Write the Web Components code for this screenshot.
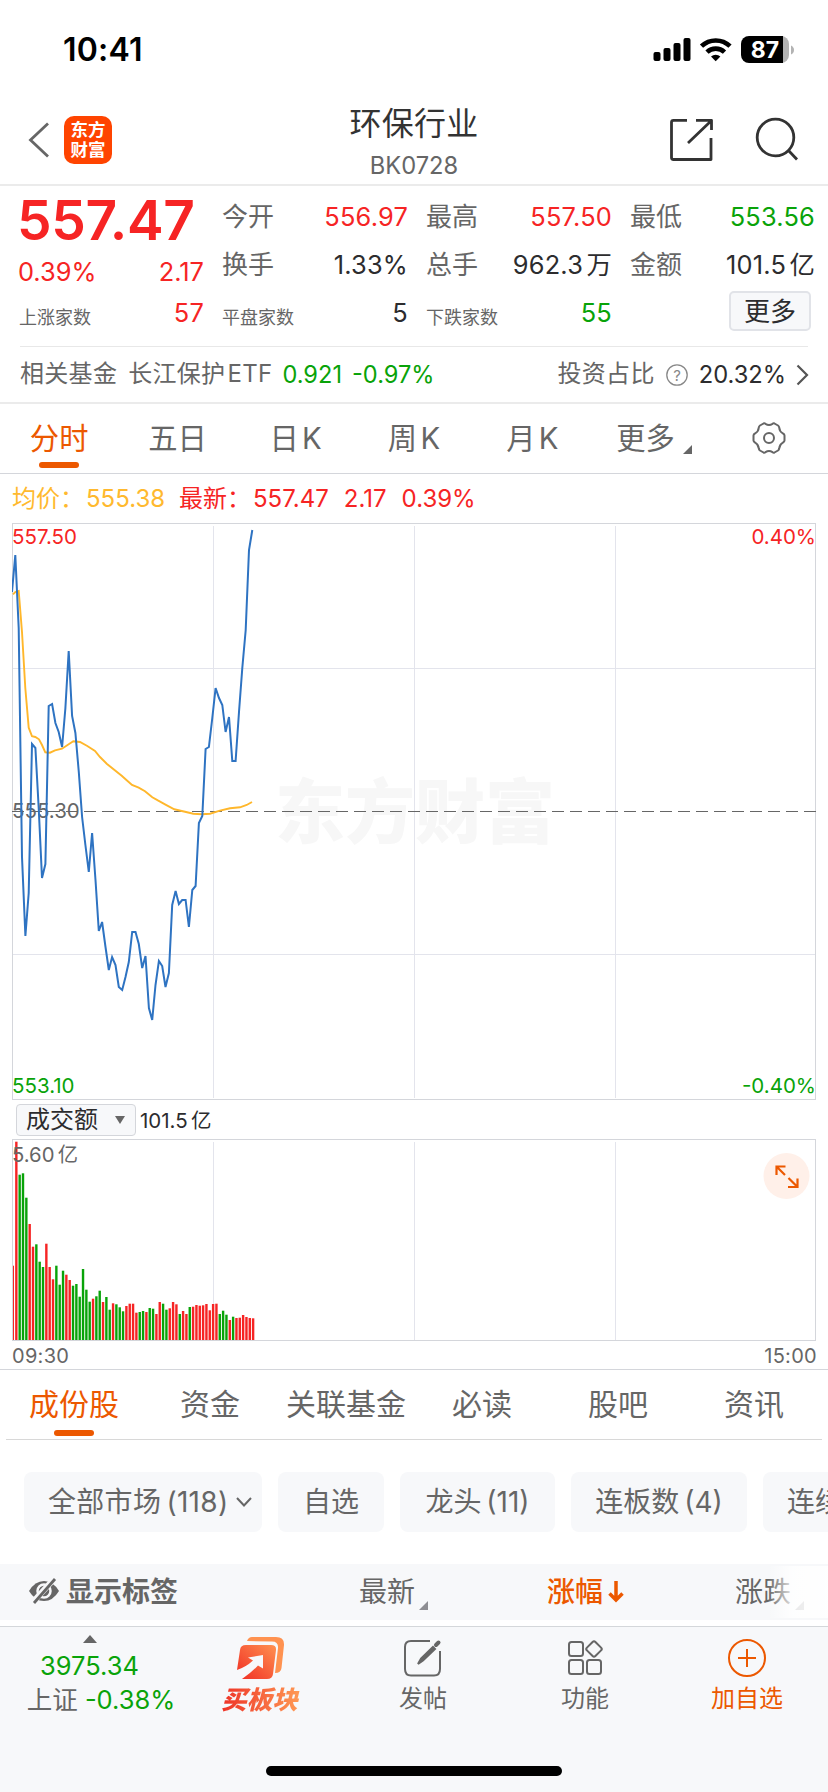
<!DOCTYPE html>
<html lang="zh-CN">
<head>
<meta charset="utf-8">
<title>环保行业 BK0728</title>
<style>
  body {
    margin: 0;
    width: 828px;
    height: 1792px;
    overflow: hidden;
    background: #fff;
    color: #666;
    font-family: Inter, "Noto Sans CJK SC", sans-serif;
    --red: #f62424;
    --green: #09a309;
    --orange: #ec5800;
    --dark: #2c2c2e;
    --pale: #f7f8fa;
    --line: #d4d6db;
  }
</style>
</head>
<body>
<stock-page></stock-page>

<script>
function define(name, html) {
  customElements.define(name, class extends HTMLElement {
    constructor() {
      super();
      this.attachShadow({ mode: 'open' });
    }
    connectedCallback() {
      this.shadowRoot.innerHTML = typeof html === 'function' ? html(this) : html;
    }
  });
}

define('status-bar', `
  <style>
    :host { display: flex; justify-content: space-between; height: 98px; padding: 0 34px 0 63px; color: #000; }
    .time { font-size: 32px; font-weight: 600; line-height: 99px; letter-spacing: 0.2px; }
    svg { display: block; margin-top: 34px; }
  </style>
  <div class="time">10:41</div>
  <svg width="144" height="32" viewBox="650 34 144 32">
    <rect x="653.500" y="52" width="7" height="9" rx="2"/>
    <rect x="663.500" y="48" width="7" height="13" rx="2"/>
    <rect x="673.500" y="43" width="7" height="18" rx="2"/>
    <rect x="683.500" y="38" width="7" height="23" rx="2"/>
    <g fill="none" stroke="#000" stroke-width="4.6">
      <path d="M701.5 46.2a20.5 20.5 0 0 1 28.5 0"/>
      <path d="M707 52.2a12.6 12.6 0 0 1 17.5 0"/>
    </g>
    <path d="M715.7 61.3l-4.700-4.700a7 7 0 0 1 9.400 0z"/>
    <path d="M749 36h32a8 8 0 0 1 8 8v11a8 8 0 0 1-8 8h-32z" fill="#b3b3b3"/>
    <path d="M749 36h34v27h-34a8 8 0 0 1-8-8v-11a8 8 0 0 1 8-8z"/>
    <path d="M791 45.5q3 1.500 3 4.500t-3 4.500z" fill="#b3b3b3"/>
    <text x="765" y="57.5" font-size="23" font-weight="700" fill="#fff" text-anchor="middle">87</text>
  </svg>
`);

define('nav-header', `
  <style>
    :host { display: flex; justify-content: space-between; height: 86px; border-bottom: 2px solid #ebebeb; }
    .side { display: flex; width: 200px; }
    .back { margin: 24px 0 0 28px; }
    .logo {
      box-sizing: border-box; width: 48px; height: 48px; margin: 18px 0 0 14px; padding-top: 3px;
      border-radius: 10px; background: #ff4400; color: #fff;
      font: 700 17.5px/20px "Noto Sans CJK SC", sans-serif; text-align: center;
    }
    .title { text-align: center; color: #333; font-size: 32px; line-height: 51px; letter-spacing: 0.3px; }
    .code { color: #666; font-size: 23.7px; line-height: 33px; letter-spacing: 0; }
    .share { overflow: visible; margin-left: 56px; }
  </style>
  <div class="side">
    <svg class="back" width="22" height="36" viewBox="0 0 22 36" fill="none" stroke="#666" stroke-width="2.8"><path d="M20 1.500L2.500 18L20 34.500"/></svg>
    <div class="logo">东方<br>财富</div>
  </div>
  <div class="title">环保行业<div class="code">BK0728</div></div>
  <div class="side">
    <svg class="share" width="144" height="86" viewBox="684 98 144 86" fill="none" stroke="#333" stroke-width="2.8">
      <path d="M687 120.300H673.500a2 2 0 0 0-2 2V157.500a2 2 0 0 0 2 2H711V138M696 120.300h15.500V130M711 121L688 143" stroke-linejoin="round"/>
      <circle cx="775.5" cy="137.5" r="18.3"/>
      <path d="M788.500 150.500l8.500 9"/>
    </svg>
  </div>
`);

define('quote-cell', el => `
  <style>
    :host { display: flex; align-items: center; justify-content: space-between; height: 48px; line-height: 48px; font-size: 26px; white-space: nowrap; }
    .small { font-size: 18px; padding-top: 9px; }
    b { margin-right: -1px; font-weight: 400; color: var(--${el.getAttribute('tone') || 'dark'}); font-size: 25.4px; letter-spacing: 0.2px; word-spacing: -4px; }
  </style>
  <span class="${el.hasAttribute('small') ? 'small' : ''}">${el.getAttribute('label')}</span><b><slot></slot></b>
`);

define('quote-panel', `
  <style>
    :host { display: block; height: 160px; }
    .grid { display: grid; grid-template-columns: 184px 185px 185px 184px; column-gap: 19px; padding: 7px 0 0 19px; }
    .grid > div { height: 144px; }
    .price { margin-left: -2px; color: var(--red); font-size: 55px; font-weight: 600; line-height: 54px; letter-spacing: -0.4px; white-space: nowrap; }
    .change { display: flex; justify-content: space-between; height: 42px; margin: 0 -1px; line-height: 50px; color: var(--red); font-size: 25.4px; }
    .more {
      box-sizing: border-box; width: 82px; height: 40px; margin: 2px 3px 0 auto;
      border: 2px solid #e1e3e8; border-radius: 5px; background: var(--pale);
      color: var(--dark); font-size: 26px; line-height: 37px; text-align: center;
    }
    hr { margin: 9px 20px 0; border: 0; height: 1px; background: #e8e8e8; }
  </style>
  <div class="grid">
    <div>
      <div class="price">557.47</div>
      <div class="change"><span>0.39%</span><span>2.17</span></div>
      <quote-cell small label="上涨家数" tone="red">57</quote-cell>
    </div>
    <div>
      <quote-cell label="今开" tone="red">556.97</quote-cell>
      <quote-cell label="换手">1.33%</quote-cell>
      <quote-cell small label="平盘家数">5</quote-cell>
    </div>
    <div>
      <quote-cell label="最高" tone="red">557.50</quote-cell>
      <quote-cell label="总手">962.3 万</quote-cell>
      <quote-cell small label="下跌家数" tone="green">55</quote-cell>
    </div>
    <div>
      <quote-cell label="最低" tone="green">553.56</quote-cell>
      <quote-cell label="金额">101.5 亿</quote-cell>
      <div class="more">更多</div>
    </div>
  </div>
  <hr>
`);

define('fund-row', `
  <style>
    :host { display: flex; align-items: center; height: 55px; padding: 0 19px 0 20px; border-bottom: 2px solid #ebebeb; font-size: 24px; line-height: 54px; white-space: nowrap; }
    .cjk { letter-spacing: 0.3px; margin-top: -1px; }
    .etf { margin-left: 11px; word-spacing: -5px; }
    .up { color: var(--green); margin-left: 10px; font-size: 23.6px; }
    .push { margin-left: auto; }
    .dark { color: var(--dark); font-size: 23.7px; }
    svg { display: block; margin: 0 11px; }
    .arrow { margin: 0 0 0 10px; }
  </style>
  <span class="cjk">相关基金</span>
  <span class="cjk etf">长江保护 ETF</span>
  <span class="up">0.921</span>
  <span class="up">-0.97%</span>
  <span class="cjk push">投资占比</span>
  <svg width="22" height="22" viewBox="0 0 22 22"><circle cx="11" cy="11" r="10.2" fill="none" stroke="#888" stroke-width="1.3"/><text x="11" y="16.5" font-size="15" fill="#888" text-anchor="middle">?</text></svg>
  <span class="dark">20.32%</span>
  <svg class="arrow" width="13" height="22" viewBox="0 0 13 22" fill="none" stroke="#555" stroke-width="2.2"><path d="M1.500 1.500L11 11L1.500 20.500"/></svg>
`);

define('tab-item', `
  <style>
    :host { display: flex; flex: 1 1 0; position: relative; justify-content: center; align-items: flex-start; font-size: 29.3px; line-height: 69px; word-spacing: -5px; white-space: nowrap; }
    :host([active]) { color: var(--orange); }
    :host([active])::after {
      content: ""; position: absolute; left: calc(50% - 20px); bottom: var(--mark-bottom, 5px);
      width: 40px; height: 6px; border-radius: 3px; background: var(--orange);
    }
  </style>
  <slot></slot>
`);

define('period-tabs', `
  <style>
    :host { display: flex; height: 69px; border-bottom: 1px solid var(--line); }
    .tri { margin: 41px -7px 0 8px; }
    .gear { margin-top: 18px; }
  </style>
  <tab-item active>分时</tab-item>
  <tab-item>五日</tab-item>
  <tab-item>日 K</tab-item>
  <tab-item>周 K</tab-item>
  <tab-item>月 K</tab-item>
  <tab-item>更多<svg class="tri" width="9" height="9"><path d="M9 0V9H0z" fill="#666"/></svg></tab-item>
  <tab-item>
    <svg class="gear" width="34" height="32" viewBox="0 0 34 32" fill="none" stroke="#666" stroke-width="2" stroke-linejoin="round">
      <path d="M11.500 1.500Q12.500 1 13.500 1.800Q17 4 20.500 1.800Q21.500 1 22.500 1.500L26 3.500Q27 4.200 27.200 5.500Q27.500 9.500 31 11.500Q32.500 12.300 32.500 13.500V18.500Q32.500 19.700 31 20.500Q27.500 22.500 27.200 26.500Q27 27.800 26 28.500L22.500 30.500Q21.500 31 20.500 30.200Q17 28 13.500 30.200Q12.500 31 11.500 30.500L8 28.500Q7 27.800 6.800 26.500Q6.500 22.500 3 20.500Q1.500 19.700 1.500 18.500V13.500Q1.500 12.300 3 11.500Q6.500 9.500 6.800 5.500Q7 4.200 8 3.500Z"/>
      <circle cx="17" cy="16" r="5"/>
    </svg>
  </tab-item>
`);

define('price-legend', `
  <style>
    :host { display: flex; align-items: center; height: 49px; padding-left: 12px; font-size: 24px; line-height: 49px; color: var(--red); white-space: nowrap; }
    .avg { color: #ffb92e; width: 167px; }
    span { display: flex; height: 49px; }
    span + span { margin-left: 15px; }
    .avg + span { margin-left: 0; }
    i { font-style: normal; width: 74px; }
  </style>
  <span class="avg"><i>均价：</i>555.38</span>
  <span><i>最新：</i>557.47</span>
  <span>2.17</span>
  <span>0.39%</span>
`);

// One sample per trading minute, 240 minutes across the full width.
const STEP = 3.338;
const PRICE = [592, 555, 628, 857, 936, 893, 744, 748, 808, 878, 864, 706, 704, 723, 732, 747, 708, 651, 716, 733,
  772, 817, 845, 872, 833, 880, 931, 922, 947, 970, 957, 965, 987, 990, 977, 962, 932, 932, 944, 968,
  956, 1008, 1020, 985, 961, 966, 987, 973, 905, 891, 904, 900, 900, 927, 890, 886, 823, 816, 749, 747,
  718, 688, 698, 705, 732, 717, 761, 761, 712, 668, 630, 550, 530];
const AVERAGE = [[13, 594.3], [15.3, 592], [18.7, 591], [22, 632], [25.3, 688], [28.7, 727.7], [32, 736.3], [35.3, 737],
  [39, 739.3], [42, 745], [45.3, 752.3], [50, 752.7], [55, 750.3], [62, 748.7], [68.7, 744.3], [73.3, 741.3], [80, 742],
  [87.3, 746], [95, 751], [100, 757], [106.7, 763.7], [121.7, 775.7], [126.7, 780.3], [132, 785], [138.7, 787.7],
  [145, 791.3], [152.3, 797.3], [158.3, 800.7], [165, 804.3], [174.3, 809.3], [185, 811.7], [193.3, 813.7],
  [201.7, 814.3], [210, 813.7], [220, 810.7], [230, 808.3], [240, 807.3], [246.7, 805], [252, 802]];

define('price-chart', () => {
  const line = PRICE.map((y, i) => `${(12 + i * STEP).toFixed(1)},${y}`).join(' ');
  return `
  <style>
    :host { display: block; height: 577px; padding-left: 12px; }
    svg { display: block; }
    text { font-size: 20.5px; }
    .mark { font: 900 70px "Noto Sans CJK SC", sans-serif; fill: #f7f7f7; }
  </style>
  <svg width="805" height="577" viewBox="12 523 805 577">
    <text class="mark" x="275" y="838">东方财富</text>
    <path d="M213.500 526V1098M414.500 526V1098M615.500 526V1098M13 668.500H816M13 954.500H816" stroke="#e3e4ec" fill="none"/>
    <rect x="12.5" y="523.5" width="803" height="576" fill="none" stroke="#d4d6db"/>
    <text x="12" y="818" fill="#666">555.30</text>
    <path d="M12 811.500H816" stroke="#666" stroke-dasharray="12 6"/>
    <polyline points="${AVERAGE.join(' ')}" fill="none" stroke="#ffb72b" stroke-width="1.9"/>
    <polyline points="${line}" fill="none" stroke="#2e73c2" stroke-width="2"/>
    <text x="12" y="544" fill="#f62424">557.50</text>
    <text x="816" y="544" fill="#f62424" text-anchor="end">0.40%</text>
    <text x="12" y="1093" fill="#09a309">553.10</text>
    <text x="816" y="1093" fill="#09a309" text-anchor="end">-0.40%</text>
  </svg>`;
});

define('volume-header', `
  <style>
    :host { display: flex; align-items: flex-start; height: 39px; padding: 0 16px; color: var(--dark); }
    .select {
      box-sizing: border-box; display: flex; width: 120px; height: 32px; margin-top: 4px; padding-left: 9px;
      border: 1px solid var(--line); border-radius: 4px; background: var(--pale); font-size: 24px; line-height: 30px;
    }
    svg { margin: 11px 0 0 17px; }
    .sum { margin: 4px 0 0 4px; font-size: 20.5px; line-height: 34px; word-spacing: -2.5px; }
  </style>
  <div class="select">成交额<svg width="10" height="8"><path d="M0 0H10L5 8z" fill="#666"/></svg></div>
  <div class="sum">101.5 亿</div>
`);

const VOLUME = 'r543 r171 g270 g266 g339 r418 r486 g479 g531 g547 r477 r547 r584 g543 g600 g558 r570 r586 g603 g598 g636 g553 g615 g651 r642 g635 g618 r652 g637 g675 r656 g659 g668 g680 r664 r657 r657 r684 g682 g679 r682 g670 g672 r688 r652 g657 g675 r671 r652 r659 g688 r679 r688 g667 r666 r661 r663 r662 r658 r677 r658 r657 g688 g678 g690 r706 g696 r700 r699 r691 r697 r700 r701'.split(' ');

define('volume-chart', () => {
  const bars = VOLUME.map((v, i) => {
    const h = (766 - Number(v.slice(1))) / 3;
    const x = Math.max(13, 11.8 + i * 3.335);
    const w = i ? 2.4 : 1;
    return `<rect x="${x.toFixed(2)}" y="${(1340 - h).toFixed(1)}" width="${w}" height="${h.toFixed(1)}" fill="${v[0] === 'r' ? '#f62424' : '#09a309'}"/>`;
  }).join('');
  return `
  <style>
    :host { display: block; height: 230px; padding-left: 12px; border-bottom: 1px solid var(--line); }
    svg { display: block; }
    text { font-size: 20.3px; fill: #666; word-spacing: -2.5px; }
    .axis { display: flex; justify-content: space-between; width: 805px; font-size: 20px; line-height: 31px; letter-spacing: 0.3px; }
  </style>
  <svg width="805" height="202" viewBox="12 1139 805 202">
    <path d="M213.500 1142V1340M414.500 1142V1340M615.500 1142V1340" stroke="#e3e4ec"/>
    <rect x="12.5" y="1139.5" width="803" height="201" fill="none" stroke="#d4d6db"/>
    ${bars}
    <text x="12" y="1162">5.60 亿</text>
    <circle cx="786.5" cy="1176" r="23" fill="#fff0e9"/>
    <path d="M776.500 1175V1166.500H785.500M777 1167L785 1175M797.500 1178.500V1187H788M797 1186.500L788.500 1178" fill="none" stroke="#ec5800" stroke-width="2.2"/>
  </svg>
  <div class="axis"><span>09:30</span><span>15:00</span></div>
`;
});

define('section-tabs', `
  <style>
    :host { display: flex; height: 69px; margin: 0 6px; border-bottom: 1px solid #d8d8d8; --mark-bottom: 3px; }
    tab-item { font-size: 30px; }
  </style>
  <tab-item active>成份股</tab-item>
  <tab-item>资金</tab-item>
  <tab-item>关联基金</tab-item>
  <tab-item>必读</tab-item>
  <tab-item>股吧</tab-item>
  <tab-item>资讯</tab-item>
`);

define('filter-chip', `
  <style>
    :host { box-sizing: border-box; display: flex; flex: none; align-items: flex-start; justify-content: center; height: 60px; border-radius: 8px; background: var(--pale); font-size: 28px; line-height: 60px; word-spacing: -3px; white-space: nowrap; }
  </style>
  <slot></slot>
`);

define('filter-row', `
  <style>
    :host { display: flex; gap: 16px; height: 60px; padding: 32px 0 32px 24px; overflow: hidden; }
    svg { margin: 25px 0 0 8px; }
    .market { width: 238px; justify-content: flex-start; padding-left: 24px; letter-spacing: 0.3px; }
    .next { width: 176px; justify-content: flex-start; padding-left: 24px; }
  </style>
  <filter-chip class="market">全部市场 (118)<svg width="16" height="10" fill="none" stroke="#666" stroke-width="2"><path d="M1 1L8 8.500L15 1"/></svg></filter-chip>
  <filter-chip style="width:106px">自选</filter-chip>
  <filter-chip style="width:155px">龙头 (11)</filter-chip>
  <filter-chip style="width:176px">连板数 (4)</filter-chip>
  <filter-chip class="next">连续</filter-chip>
`);

define('table-header', `
  <style>
    :host { display: flex; position: relative; align-items: flex-start; height: 56px; margin-bottom: 6px; padding-left: 28px; background: var(--pale); font-size: 28px; line-height: 57px; overflow: hidden; white-space: nowrap; }
    :host > * { flex: none; }
    .eye { margin-top: 14px; }
    .label { width: 293px; margin-left: 6px; font-weight: 700; }
    .col { display: flex; width: 188px; }
    .sorted { color: var(--orange); font-weight: 500; }
    .tri { margin: 37px 0 0 4px; }
    .sorted svg { margin: 17px 0 0 5px; }
    .fade { position: absolute; right: 0; top: 2px; width: 60px; height: 52px; background: linear-gradient(90deg, #fff0, #fffc 40%, #fffffff0); }
  </style>
  <svg class="eye" width="32" height="26" viewBox="0 0 32 26">
    <path d="M1 13Q7 3 16 3T31 13Q25 23 16 23T1 13Z" fill="#666"/>
    <circle cx="16" cy="13" r="6.5" fill="none" stroke="#f7f8fa" stroke-width="2.5"/>
    <path d="M5 24L26 1" stroke="#f7f8fa" stroke-width="6"/>
    <path d="M6 25L27 1" stroke="#666" stroke-width="2.8"/>
  </svg>
  <div class="label">显示标签</div>
  <div class="col">最新<svg class="tri" width="9" height="9"><path d="M9 0V9H0z" fill="#8e8e93"/></svg></div>
  <div class="col sorted">涨幅<svg width="16" height="22" fill="none" stroke="#ec5800" stroke-width="3.5"><path d="M8 0V19M1.500 12.500L8 19L14.500 12.500"/></svg></div>
  <div class="col">涨跌<svg class="tri" width="9" height="9"><path d="M9 0V9H0z" fill="#8e8e93"/></svg></div>
  <div class="fade"></div>
`);

define('bar-action', `
  <style>
    :host { display: flex; flex-direction: column; align-items: center; width: 162px; font-size: 24px; line-height: 32px; }
    ::slotted(svg) { display: block; height: 56px; overflow: visible; }
  </style>
  <slot name="icon"></slot>
  <slot></slot>
`);

define('bottom-bar', `
  <style>
    :host { display: block; height: 165px; border-top: 1px solid #d4d7da; background: var(--pale); }
    .row { display: flex; height: 139px; padding-left: 18px; }
    .index { width: 162px; text-align: center; font-size: 25.5px; line-height: 34px; color: var(--green); white-space: nowrap; }
    .index svg { display: block; margin: 8px auto 6px 65px; }
    .index div:first-of-type { padding-right: 19px; }
    .index span { color: #666; }
    .index .sub { margin-left: 4px; }
    .buy {
      font: italic 900 25.5px/30px "Noto Sans CJK SC", sans-serif;
      background: linear-gradient(90deg, #ee3126, #ff9b55); -webkit-background-clip: text; background-clip: text; color: transparent;
      padding-right: 3px;
    }
    .add { color: var(--orange); }
    .home { width: 296px; height: 10px; margin: 0 auto; border-radius: 5px; background: #000; }
  </style>
  <div class="row">
    <div class="index">
      <svg width="14" height="8"><path d="M7 0L14 8H0z" fill="#666"/></svg>
      <div>3975.34</div>
      <div class="sub"><span>上证</span> -0.38%</div>
    </div>
    <bar-action>
      <svg slot="icon" width="48" viewBox="237 1627 48 56">
        <defs>
          <linearGradient id="g" x1="0" y1="1" x2="1" y2="0"><stop stop-color="#f02d24"/><stop offset="1" stop-color="#ff9150"/></linearGradient>
        </defs>
        <path d="M247 1641Q248.500 1637 252 1637H276Q284.500 1637 284 1645L281.500 1668Q281 1673 275 1673L278 1648Q278.500 1641.500 272 1641.500Z" fill="#ff9250"/>
        <path d="M246 1645H271Q276.500 1645 276 1650L273 1674Q272.500 1679 267 1679H242Q251 1673 258 1665.500L263 1668.500V1655L248 1657.500L253 1660.500Q246 1667 237 1670L240 1650Q240.500 1645 246 1645Z" fill="url(#g)"/>
      </svg>
      <div class="buy">买板块</div>
    </bar-action>
    <bar-action>
      <svg slot="icon" width="38" viewBox="405 1627 38 56" fill="none" stroke="#666" stroke-width="2">
        <path d="M431 1641H412Q406 1641 406 1647V1669Q406 1675.500 412 1675.500H435Q441 1675.500 441 1669V1651"/>
        <path d="M419 1664L422 1658.500L434 1647L436 1649L424 1660.500Z" fill="#666"/>
        <path d="M437 1645L439.500 1642.500" stroke-width="4" stroke-linecap="round"/>
      </svg>
      发帖
    </bar-action>
    <bar-action>
      <svg slot="icon" width="36" viewBox="567 1627 36 56" fill="none" stroke="#666" stroke-width="2">
        <rect x="569" y="1642" width="14" height="14" rx="2.5"/>
        <rect x="569" y="1660" width="14" height="14" rx="2.5"/>
        <rect x="587" y="1660" width="14" height="14" rx="2.5"/>
        <rect x="588" y="1643" width="12" height="12" rx="2" transform="rotate(45 594 1649)"/>
      </svg>
      功能
    </bar-action>
    <bar-action class="add">
      <svg slot="icon" width="38" viewBox="728 1627 38 56" fill="none" stroke="#ec5800" stroke-width="2">
        <circle cx="747" cy="1658" r="18"/>
        <path d="M738 1658H756M747 1649V1667"/>
      </svg>
      加自选
    </bar-action>
  </div>
  <div class="home"></div>
`);

define('stock-page', `
  <style>
    :host { display: flex; flex-direction: column; width: 828px; height: 1792px; }
    :host > * { flex: none; }
    fund-row { margin-top: 1px; }
  </style>
  <status-bar></status-bar>
  <nav-header></nav-header>
  <quote-panel></quote-panel>
  <fund-row></fund-row>
  <period-tabs></period-tabs>
  <price-legend></price-legend>
  <price-chart></price-chart>
  <volume-header></volume-header>
  <volume-chart></volume-chart>
  <section-tabs></section-tabs>
  <filter-row></filter-row>
  <table-header></table-header>
  <bottom-bar></bottom-bar>
`);
</script>
</body>
</html>
